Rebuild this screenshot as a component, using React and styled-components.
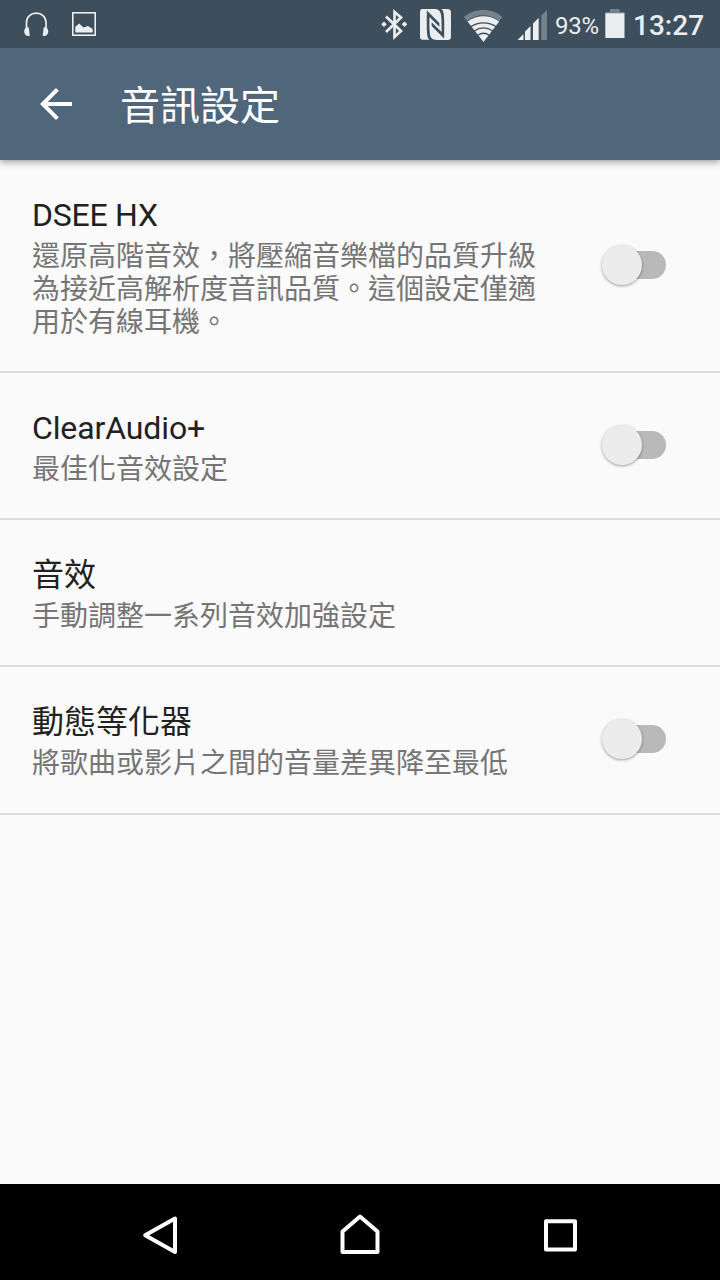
import React from "react";
import styled, { createGlobalStyle } from "styled-components";
import { SiNfc } from "react-icons/si";

const Global = createGlobalStyle`
  * { box-sizing: border-box; }
  body { margin: 0; background: #fafafa; }
`;

const Screen = styled.div`
  width: 720px;
  height: 1280px;
  display: flex;
  flex-direction: column;
  background: #fafafa;
  font-family: Roboto, "Noto Sans CJK TC", sans-serif;
  overflow: hidden;
`;

const StatusBar = styled.header`
  flex: none;
  height: 48px;
  display: flex;
  justify-content: space-between;
  background: #3d4e5d;
  color: #ebedee;
  z-index: 2;
`;

const StatusGroup = styled.div`
  display: flex;
  align-items: center;
`;

const Glyph = styled.svg`
  display: block;
  flex: none;
  width: ${(p) => p.$w}px;
  height: 48px;
`;

const NfcMark = styled(SiNfc)`
  display: block;
  flex: none;
  width: 31px;
  height: 31px;
  color: #ebedee;
`;

const Percent = styled.span`
  width: 47px;
  padding-left: 2px;
  font-size: 24px;
  letter-spacing: -0.2px;
  line-height: 28px;
  padding-top: 3px;
  white-space: nowrap;
`;

const Battery = styled.svg`
  display: block;
  flex: none;
  width: 33px;
  height: 48px;
`;

const Clock = styled.span`
  width: 87px;
  padding-top: 3px;
  font-size: 28px;
  font-weight: 500;
  line-height: 32px;
  white-space: nowrap;
`;

const AppBar = styled.div`
  flex: none;
  height: 112px;
  display: flex;
  align-items: center;
  padding-left: 32px;
  background: #50667a;
  box-shadow: 0 2px 7px rgba(0, 0, 0, 0.38);
  z-index: 1;
`;

const BackIcon = styled.svg`
  width: 48px;
  height: 48px;
  margin-right: 40px;
`;

const Heading = styled.h1`
  margin: 0;
  padding-top: 5px;
  font-size: 40px;
  font-weight: 400;
  line-height: 60px;
  color: #fff;
`;

const List = styled.main`
  flex: 1;
`;

const Row = styled.section`
  display: flex;
  align-items: center;
  justify-content: space-between;
  height: ${(p) => p.$height}px;
  padding: 0 55px ${(p) => p.$bottom || 0}px 32px;
  border-bottom: 2px solid #dcdcdc;
`;

const Copy = styled.div`
  width: 520px;
  padding-top: 4px;
`;

const Title = styled.h2`
  margin: 0;
  height: 44px;
  font-size: 32px;
  font-weight: 400;
  letter-spacing: ${(p) => p.$tracking || 0}px;
  line-height: 38px;
  color: #212121;
`;

const Summary = styled.p`
  margin: 0;
  font-size: 28px;
  line-height: 33px;
  color: #757575;
`;

const Toggle = styled.div`
  display: flex;
  align-items: center;
  width: 64px;
  height: 40px;
  margin-bottom: 1px;
`;

const Thumb = styled.div`
  flex: none;
  width: 40px;
  height: 40px;
  margin-left: 0.5px;
  border-radius: 50%;
  background: #ececec;
  box-shadow: 0 1px 3px rgba(0, 0, 0, 0.38);
  z-index: 1;
`;

const Track = styled.div`
  flex: none;
  width: 44px;
  height: 28px;
  margin-left: -20px;
  border-radius: 0 14px 14px 0;
  background: #b9b9b9;
`;

const NavBar = styled.nav`
  flex: none;
  height: 96px;
  display: flex;
  justify-content: center;
  align-items: center;
  gap: 152px;
  background: #000;
`;

const NavIcon = styled.svg`
  width: 48px;
  height: 48px;
  fill: none;
  stroke: #fff;
  stroke-width: 4;
  stroke-linejoin: round;
`;

const settings = [
  { title: "DSEE HX", tracking: -0.25, lines: ["還原高階音效，將壓縮音樂檔的品質升級", "為接近高解析度音訊品質。這個設定僅適", "用於有線耳機。"], toggle: true, height: 213 },
  { title: "ClearAudio+", tracking: -0.12, lines: ["最佳化音效設定"], toggle: true, height: 147 },
  { title: "音效", lines: ["手動調整一系列音效加強設定"], toggle: false, height: 147 },
  { title: "動態等化器", lines: ["將歌曲或影片之間的音量差異降至最低"], toggle: true, height: 148, bottom: 1 },
];

function Notifications() {
  return (
    <Glyph $w={110} viewBox="0 0 110 48" fill="none">
      <path d="M26.500 28V22.500C26.500 17 30.500 13.200 36.200 13.200S46 17 46 22.500V28" stroke="#ebedee" strokeWidth="1.700" />
      <path d="M28.800 27.300l1 8.500c-3 .9-5.600-1-5.600-4.300 0-3 1.600-4.500 4.600-4.200zM43.700 27.300l-1 8.500c3 .9 5.600-1 5.600-4.300 0-3-1.600-4.500-4.600-4.200z" fill="#ebedee" />
      <rect x="72.800" y="12.800" width="22.400" height="22.400" stroke="#ebedee" strokeWidth="1.600" />
      <path d="M75.300 32.500V26.800l3.900-3.200 4.300 4 4.500-1.600 4.700 3v3.500z" fill="#ebedee" />
    </Glyph>
  );
}

function Bluetooth() {
  return (
    <Glyph $w={44} viewBox="376 0 44 48" fill="none">
      <path d="M386 16.500L401 31 394.500 37V12L401 17.500 386 32" stroke="#ebedee" strokeWidth="2.700" />
      <path d="M384 21.400l2.800 2.800-2.800 2.800-2.800-2.800zM404.500 21.400l2.800 2.800-2.800 2.800-2.800-2.800z" fill="#ebedee" />
    </Glyph>
  );
}

function Signals() {
  return (
    <Glyph $w={102} viewBox="451 0 102 48" fill="none">
      <path d="M463.700 17C474.500 7.500 492.500 7.500 502.500 17l-3.300 4C490 13.200 476.500 13.200 467 21z" fill="#75828c" />
      <path d="M467.500 21.500C477 14.500 490 14.500 499.200 21.500L483.500 42z" fill="#ebedee" />
      <path d="M470.500 26.800C478.500 21.500 488.500 21.500 496.500 26.800M474 31.200C480 27 487 27 493 31.200M477.500 35.500C481.500 32.500 485.500 32.500 489.500 35.500" stroke="#3d4e5d" strokeWidth="1.300" />
      <path d="M517.500 40l6-6v6zM525 40v-8.500l5.500-5.500v14zM533 40V23.500l5.700-5.700V40z" fill="#ebedee" />
      <path d="M541.300 40V15.500l5.700-5.500v30z" fill="#75828c" />
    </Glyph>
  );
}

export default function App() {
  return (
    <Screen>
      <Global />
      <StatusBar>
        <StatusGroup><Notifications /></StatusGroup>
        <StatusGroup>
          <Bluetooth />
          <NfcMark />
          <Signals />
          <Percent>93%</Percent>
          <Battery viewBox="600 0 33 48">
            <path d="M610 9h9.500v3h5v2h-19v-2h4.500z" fill="#75828c" />
            <path d="M605.300 13.300h19.200V38h-19.200z" fill="#ebedee" />
          </Battery>
          <Clock>13:27</Clock>
        </StatusGroup>
      </StatusBar>
      <AppBar>
        <BackIcon viewBox="0 0 24 24" fill="#fff">
          <path d="M20 11H7.830l5.590-5.590L12 4l-8 8 8 8 1.410-1.410L7.830 13H20v-2z" />
        </BackIcon>
        <Heading>音訊設定</Heading>
      </AppBar>
      <List>
        {settings.map((s) => (
          <Row key={s.title} $height={s.height} $bottom={s.bottom}>
            <Copy>
              <Title $tracking={s.tracking}>{s.title}</Title>
              {s.lines.map((line) => <Summary key={line}>{line}</Summary>)}
            </Copy>
            {s.toggle && <Toggle><Thumb /><Track /></Toggle>}
          </Row>
        ))}
      </List>
      <NavBar>
        <NavIcon viewBox="136 1208 48 48"><path d="M145.200 1235.300L175 1218.500V1252z" /></NavIcon>
        <NavIcon viewBox="336 1208 48 48"><path d="M342.500 1252V1231.500L360 1216.500 377.500 1231.500V1252z" /></NavIcon>
        <NavIcon viewBox="536 1208 48 48"><path d="M546 1221.300h29v28.200h-29z" /></NavIcon>
      </NavBar>
    </Screen>
  );
}
